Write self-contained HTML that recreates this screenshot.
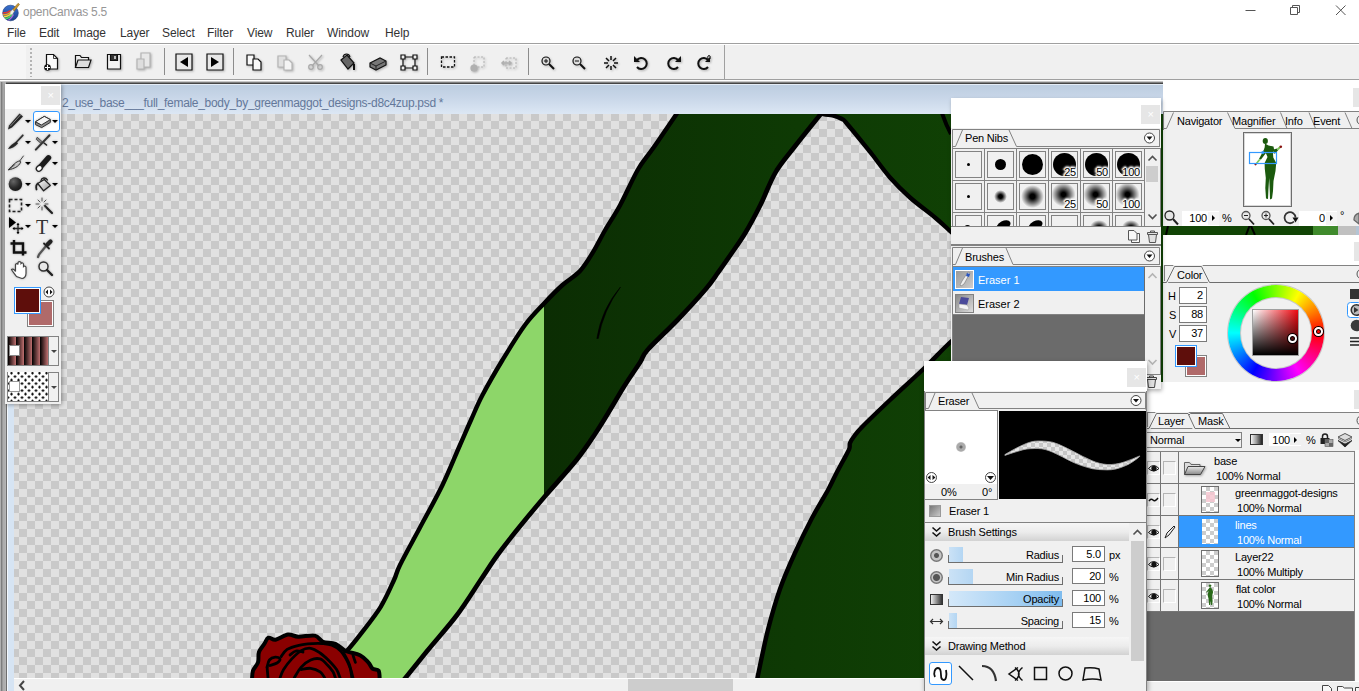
<!DOCTYPE html>
<html><head><meta charset="utf-8"><title>openCanvas 5.5</title>
<style>
html,body{margin:0;padding:0}
body{width:1359px;height:691px;overflow:hidden;position:relative;background:#fff;font-family:"Liberation Sans",sans-serif;font-size:11px;letter-spacing:-.2px;color:#000}
.a{position:absolute}
.t{position:absolute;white-space:nowrap;line-height:14px}
.menu .t{font-size:12px;color:#333;top:25px;line-height:16px;letter-spacing:-.1px}
.hdr{position:absolute;background:#fff}
.cls{position:absolute;width:19px;height:19px;background:#e6e6e6;color:#fff;font-size:11px;line-height:18px;text-align:center}
.tabbar{position:absolute;background:#f0f0f0;border:1px solid #828282;box-sizing:border-box}
.fld{position:absolute;background:#fff;border:1px solid #7a7a7a;box-sizing:border-box;text-align:right;line-height:13px;font-size:11px}
.pn{position:absolute;background:#f0f0f0}
.arr{position:absolute;width:0;height:0;border-left:3px solid transparent;border-right:3px solid transparent;border-top:3px solid #000}
.cell{position:absolute;width:31px;height:31px;border-right:1px solid #828282;border-bottom:1px solid #828282}
.cell i{font-style:normal;position:absolute;left:2px;top:2px;width:25px;height:25px;border:1px solid #828282;display:block}
.cell b{position:absolute;border-radius:50%;background:#000;display:block}
.cell s{position:absolute;right:1px;bottom:-1px;font-size:11px;line-height:11px;text-decoration:none;color:#000;text-shadow:0 0 2px #fff,0 0 2px #fff,0 0 3px #fff,0 0 3px #fff,1px 0 1px #fff,-1px 0 1px #fff,0 1px 1px #fff,0 -1px 1px #fff,-2px 0 2px #fff,0 -2px 2px #fff}
.lrow{position:absolute;left:0;width:207px;height:31px;border-bottom:1px solid #757575;background:#f0f0f0}
.lrow .e{position:absolute;left:0;top:0;width:13px;height:31px;border-right:1px solid #757575}.lrow .e:before{content:"";position:absolute;left:0;top:9px;width:11px;height:12px;border:1px solid #b4b4b4;border-right-color:#fff;border-bottom-color:#fff}
.lrow .k{position:absolute;left:14px;top:0;width:17px;height:31px;border-right:1px solid #757575}
.lrow .k i{position:absolute;left:2px;top:9px;width:11px;height:12px;border:1px solid #b4b4b4;border-right-color:#fff;border-bottom-color:#fff;display:block}
.lrow .th{position:absolute;top:2px;width:16px;height:25px;border:1px solid #707070;background:conic-gradient(#ccc 25%,#fff 0 50%,#ccc 0 75%,#fff 0) 0 0/8px 8px}

.chk{background:conic-gradient(#c9c9c9 25%,#e1e1e1 0 50%,#c9c9c9 0 75%,#e1e1e1 0) 5px 7px/16px 16px}
</style></head>
<body>
<!-- title bar -->
<div class="a" style="left:0;top:0;width:1359px;height:43px;background:#fff"></div>
<svg class="a" style="left:1px;top:2px" width="20" height="20" viewBox="0 0 20 20"><defs><clipPath id="icc"><circle cx="9.500" cy="11" r="7.800"/></clipPath><linearGradient id="icg" x1="0" y1="0" x2="0" y2="1"><stop offset="0" stop-color="#3a72cf"/><stop offset="1" stop-color="#1a3d8c"/></linearGradient></defs><circle cx="9.500" cy="11" r="7.800" fill="url(#icg)" stroke="#1b3a7a" stroke-width=".6"/><g clip-path="url(#icc)" fill="none" stroke-width="1.500"><path d="M9.500 8.500Q6 11.500 1 11" stroke="#e8382f"/><path d="M10.300 9.500Q7 13 1.500 13" stroke="#f5a623"/><path d="M11 10.500Q8 14.500 2.500 15" stroke="#f3e53a"/><path d="M11.700 11.500Q9 16 4 17" stroke="#4cd964"/><path d="M12.400 12.500Q10 17.500 6 19" stroke="#b06ad8"/></g><path d="M17.200 1.200l1.300 1.200-5.300 6.800-1.800-1.600z" fill="#c8952e" stroke="#7a5a1a" stroke-width=".5"/><path d="M11.400 7.600l1.800 1.600-1.600 3-2.600.6.400-2.800z" fill="#f4f0e4" stroke="#999" stroke-width=".4"/></svg>
<div class="t" style="left:23px;top:4px;font-size:12px;color:#979797;line-height:17px;letter-spacing:-.25px">openCanvas 5.5</div>
<svg class="a" style="left:1240px;top:0" width="119" height="22" viewBox="0 0 119 22" fill="none" stroke="#555" stroke-width="1"><path d="M5.5 10.5h10"/><path d="M50.5 7.5h7v7h-7zM52.500 7.500v-2h7v7h-2"/><path d="M96 5.500l9.500 9.500M105.500 5.500L96 15"/></svg>
<div class="menu">
<div class="t" style="left:7px">File</div><div class="t" style="left:39px">Edit</div><div class="t" style="left:73px">Image</div><div class="t" style="left:120px">Layer</div><div class="t" style="left:162px">Select</div><div class="t" style="left:207px">Filter</div><div class="t" style="left:247px">View</div><div class="t" style="left:286px">Ruler</div><div class="t" style="left:327px">Window</div><div class="t" style="left:385px">Help</div>
</div>
<!-- toolbar -->
<div class="a" style="left:0;top:43px;width:1359px;height:38px;background:#f0f0f0;border-top:1px solid #a0a0a0;box-sizing:border-box"></div>
<div class="a" style="left:0;top:44px;width:1359px;height:1px;background:#fff"></div>
<div class="a" style="left:0;top:45px;width:26px;height:34px;background:#f6f6f6"></div>
<div class="a" style="left:0;top:79px;width:1359px;height:1px;background:#a0a0a0"></div><div class="a" style="left:0;top:80px;width:1359px;height:1px;background:#fff"></div>
<div class="a" style="left:30px;top:48px;width:2px;height:29px;background:repeating-linear-gradient(#b4b4b4 0 2px,transparent 2px 4px)"></div>
<div class="a" style="left:164px;top:48px;width:1px;height:27px;background:#8c8c8c"></div>
<div class="a" style="left:233px;top:48px;width:1px;height:27px;background:#8c8c8c"></div>
<div class="a" style="left:427px;top:48px;width:1px;height:27px;background:#8c8c8c"></div>
<div class="a" style="left:528px;top:48px;width:1px;height:27px;background:#8c8c8c"></div>
<div class="a" style="left:724px;top:45px;width:1px;height:34px;background:#a0a0a0"></div>
<svg class="a" style="left:0;top:43px;filter:drop-shadow(1px 1px .8px rgba(0,0,0,.28))" width="730" height="38" viewBox="0 43 730 38">
<g fill="none" stroke="#111" stroke-width="1.2">
<!-- new -->
<path d="M46.500 54.500h7l4 4v10.500h-11z" fill="#fafafa"/><path d="M53.500 54.500v4h4" stroke-width=".8"/><circle cx="47.500" cy="67.500" r="3.300" fill="#111" stroke="none"/><path d="M45 67.500h5M47.500 65v5" stroke="#fff" stroke-width="1.100"/>
<!-- open -->
<path d="M75.500 67.500V55.500h4.500l1.500 2h7v2.500" fill="#eee"/><path d="M75.500 67.500l2.500-7.500h13l-2.500 7.500z" fill="#ddd"/>
<!-- save -->
<path d="M107.500 54.500h13v14.500h-13z" fill="#f4f4f4"/><path d="M110.500 54.500h7v6h-7z" fill="#333"/><path d="M115 56v3" stroke="#eee" stroke-width="1.500"/>
<!-- save all (disabled) -->
<g stroke="#b4b4b4"><path d="M141 53h9v14h-9z" fill="#e8e8e8"/><path d="M137 59h7v10h-7z" fill="#ddd"/></g>
<!-- prev / next -->
<path d="M176 54h16v16h-16z" fill="#e8e8e8"/><path d="M188 57v10l-8-5z" fill="#000" stroke="none"/>
<path d="M207 54h16v16h-16z" fill="#e8e8e8"/><path d="M211 57v10l8-5z" fill="#000" stroke="none"/>
<!-- copy -->
<path d="M247 55h7v10h-7z" fill="#fafafa"/><path d="M253 59h5l3 3v8h-8z" fill="#fafafa"/>
<!-- paste (disabled) -->
<g stroke="#b4b4b4"><path d="M278 56h8v11h-8z" fill="#e0e0e0"/><path d="M284 60h5l3 3v7h-8z" fill="#f4f4f4"/></g>
<!-- cut (disabled) -->
<g stroke="#a8a8a8"><path d="M309 55l10 11M322 55l-10 11"/><circle cx="311" cy="67" r="2.3"/><circle cx="320" cy="67" r="2.3"/></g>
<!-- bucket -->
<path d="M341 60l6-5 7 8-6 6z" fill="#666"/><path d="M343 57c1-4 6-4 7 0" /><path d="M354 64v6" stroke-width="2"/>
<!-- eraser -->
<path d="M370 63l10-5 6 3v4l-10 5-6-3z" fill="#777"/><path d="M370 63l6 3 10-5M376 66v4" stroke="#222" stroke-width="1"/>
<!-- transform -->
<path d="M403 57h12v11h-12z"/><path d="M401 55h4v4h-4zM413 55h4v4h-4zM401 66h4v4h-4zM413 66h4v4h-4z" fill="#f0f0f0" stroke-width="1.2"/>
<g transform="translate(0 1)"><!-- select rect -->
<path d="M441.500 56h13v10h-13z" stroke-dasharray="2.500 1.500" stroke-width="1.300"/>
<g stroke="#b0b0b0"><path d="M474 56h10v10h-10z" stroke-dasharray="2 1.500" stroke-width="1"/><circle cx="474" cy="67" r="3" fill="#b0b0b0"/>
<path d="M506 57h10v10h-10z" stroke-dasharray="2 1.500" stroke-width="1"/><path d="M502 62h9M504 60l-2 2 2 2M509 60l2 2-2 2" stroke-width="1.500"/></g>
<!-- zoom in/out -->
<circle cx="546" cy="60" r="4"/><path d="M549 63l5 5" stroke-width="2"/><path d="M544 60h4M546 58v4" stroke-width="1"/>
<circle cx="577" cy="60" r="4"/><path d="M580 63l5 5" stroke-width="2"/><path d="M575 60h4" stroke-width="1"/>
<!-- sparkle -->
<path d="M611 55v4M611 65v4M604 62h4M614 62h4M606 57l3 3M613 64l3 3M616 57l-3 3M609 64l-3 3" stroke-width="1.500"/>
<!-- undo redo reset -->
<path d="M637 59a5.500 5.500 0 1 1 0 7" stroke-width="2"/><path d="M634 55v6h6z" fill="#111" stroke="none"/>
<path d="M678 59a5.500 5.500 0 1 0 0 7" stroke-width="2"/><path d="M681 55v6h-6z" fill="#111" stroke="none"/>
<path d="M708 59a5.500 5.500 0 1 0 0 7" stroke-width="2"/><path d="M710 56v5h-5z" fill="#111" stroke="none"/><ellipse cx="709" cy="56.500" rx="1.300" ry="2" stroke-width="1"/>
</g></g></svg>
<!-- document window -->
<div class="a" style="left:0;top:81px;width:1359px;height:1px;background:#c8c8c8"></div>
<div class="a" style="left:0;top:82px;width:1359px;height:1px;background:#808080"></div><div class="a" style="left:0;top:83px;width:1359px;height:1px;background:#454545"></div>
<div class="a" style="left:0;top:82px;width:6px;height:609px;background:linear-gradient(90deg,#b0b0b0 0 1px,#7d7d7d 1px 2px,#9a9a9a 2px 3px,#adadad 3px 5px,#b4b4b4 5px)"></div>
<div class="a" style="left:6px;top:84px;width:1px;height:607px;background:#6e6e6e"></div>
<div class="a" style="left:7px;top:84px;width:1px;height:607px;background:#f4f8fc"></div>
<div class="a" style="left:8px;top:84px;width:6px;height:607px;background:#d6e4f3"></div>
<div class="a" style="left:8px;top:84px;width:1351px;height:30px;background:linear-gradient(#e4ecf6 0 1px,#bccde0 1px,#c8d6e8 45%,#dce7f4)"></div>
<div class="t" style="left:62px;top:95px;font-size:12px;color:#64789a;line-height:16px;letter-spacing:-.3px">2_use_base___full_female_body_by_greenmaggot_designs-d8c4zup.psd *</div>
<div class="a chk" style="left:14px;top:114px;width:1345px;height:564px"></div>
<svg id="art" width="1359" height="691" viewBox="0 0 1359 691" style="position:absolute;left:0;top:0">
<defs><linearGradient id="dg" gradientUnits="userSpaceOnUse" x1="544" y1="0" x2="1050" y2="0"><stop offset="0" stop-color="#0b2d03"/><stop offset=".5" stop-color="#0e3a04"/><stop offset="1" stop-color="#114405"/></linearGradient>
<clipPath id="cv"><rect x="14" y="114" width="1345" height="564"/></clipPath>
<clipPath id="armc"><path d="M686.0 100.0C684.4 102.3 682.0 105.9 676.5 114.0C671.0 122.1 659.2 139.5 652.7 148.8C646.2 158.1 643.1 160.6 637.7 170.0C632.3 179.4 625.6 195.0 620.2 205.0C614.8 215.0 609.8 222.1 605.2 230.0C600.6 237.9 596.9 245.9 592.7 252.7C588.5 259.5 585.0 265.6 580.0 271.0C575.0 276.4 568.3 279.8 562.5 285.0C556.7 290.2 551.2 295.8 545.0 302.5C538.8 309.2 532.1 315.4 525.0 325.0C517.9 334.6 509.6 348.3 502.5 360.0C495.4 371.7 487.8 385.0 482.5 395.0C477.2 405.0 474.8 411.7 471.0 420.0C467.2 428.3 464.8 434.2 460.0 445.0C455.2 455.8 449.2 471.2 442.5 485.0C435.8 498.8 427.1 514.2 420.0 527.5C412.9 540.8 404.3 556.2 400.0 565.0C395.7 573.8 397.2 573.0 394.0 580.0C390.8 587.0 386.2 597.9 380.7 606.8C375.2 615.7 366.7 626.2 361.0 633.6C355.3 641.0 351.8 645.5 346.6 651.2C341.4 656.9 332.8 665.2 330.0 668.0L395.0 691.0C396.7 688.8 399.9 684.7 405.4 677.9C410.9 671.1 419.4 660.5 428.0 650.0C436.6 639.5 448.2 626.7 457.0 615.0C465.8 603.3 473.9 590.0 480.6 580.0C487.4 570.0 490.8 564.2 497.5 555.0C504.2 545.8 513.0 534.8 521.0 525.0C529.0 515.2 536.0 506.8 545.2 496.0C554.5 485.2 568.0 470.6 576.5 460.0C585.0 449.4 590.4 440.8 596.0 432.5C601.6 424.2 605.2 417.9 610.0 410.0C614.8 402.1 620.0 392.9 625.0 385.0C630.0 377.1 636.2 368.3 640.0 362.5C643.8 356.7 641.2 357.1 647.5 350.0C653.8 342.9 667.9 330.0 677.5 320.0C687.1 310.0 698.2 297.9 705.0 290.0C711.8 282.1 713.8 278.5 718.0 272.7C722.2 266.9 725.8 261.7 730.4 255.0C735.0 248.3 740.4 241.0 745.4 232.7C750.4 224.4 755.4 215.0 760.4 205.0C765.4 195.0 769.7 182.3 775.4 172.6C781.1 162.9 787.0 156.6 794.6 146.8C802.2 137.0 816.2 119.7 821.0 113.8C825.8 107.9 821.5 113.8 823.5 111.5C825.5 109.2 831.4 101.9 833.0 100.0Z"/></clipPath>
</defs>
<g clip-path="url(#cv)">
<path d="M811.0 100.0C812.6 102.1 816.9 110.2 820.5 112.8C824.1 115.4 829.1 114.4 832.6 115.4C836.1 116.4 839.3 117.6 841.5 118.8C843.7 120.0 842.1 118.0 846.0 122.5C849.9 127.0 860.6 140.2 865.0 145.6C869.4 151.0 868.3 149.7 872.5 155.0C876.7 160.3 883.8 170.4 890.0 177.5C896.2 184.6 902.5 190.8 910.0 197.5C917.5 204.2 928.3 211.9 935.0 217.5C941.7 223.1 943.3 224.8 950.0 231.0C956.7 237.2 968.3 245.2 975.0 255.0C981.7 264.8 990.0 278.8 990.0 290.0C990.0 301.2 981.7 313.2 975.0 322.0C968.3 330.8 958.3 334.9 950.0 342.5C941.7 350.1 935.0 357.9 925.0 367.5C915.0 377.1 900.4 390.2 890.0 400.0C879.6 409.8 868.5 420.4 862.5 426.5C856.5 432.6 856.1 433.8 854.0 436.5C851.9 439.2 850.8 440.9 850.0 443.0C849.2 445.1 850.3 446.2 849.2 449.0C848.1 451.8 845.8 455.7 843.5 460.0C841.2 464.3 838.1 470.0 835.5 475.0C832.9 480.0 832.0 482.7 828.0 490.0C824.0 497.3 817.1 508.3 811.5 519.0C805.9 529.7 799.8 542.3 794.5 554.0C789.2 565.7 784.4 576.4 780.0 589.0C775.6 601.6 771.8 614.8 768.0 629.6C764.2 644.4 759.7 667.4 757.5 677.6C755.3 687.8 755.4 688.8 755.0 691.0L1359 691L1359 100Z" fill="url(#dg)" stroke="#000" stroke-width="4.4" stroke-linejoin="round"/>
<path d="M686.0 100.0C684.4 102.3 682.0 105.9 676.5 114.0C671.0 122.1 659.2 139.5 652.7 148.8C646.2 158.1 643.1 160.6 637.7 170.0C632.3 179.4 625.6 195.0 620.2 205.0C614.8 215.0 609.8 222.1 605.2 230.0C600.6 237.9 596.9 245.9 592.7 252.7C588.5 259.5 585.0 265.6 580.0 271.0C575.0 276.4 568.3 279.8 562.5 285.0C556.7 290.2 551.2 295.8 545.0 302.5C538.8 309.2 532.1 315.4 525.0 325.0C517.9 334.6 509.6 348.3 502.5 360.0C495.4 371.7 487.8 385.0 482.5 395.0C477.2 405.0 474.8 411.7 471.0 420.0C467.2 428.3 464.8 434.2 460.0 445.0C455.2 455.8 449.2 471.2 442.5 485.0C435.8 498.8 427.1 514.2 420.0 527.5C412.9 540.8 404.3 556.2 400.0 565.0C395.7 573.8 397.2 573.0 394.0 580.0C390.8 587.0 386.2 597.9 380.7 606.8C375.2 615.7 366.7 626.2 361.0 633.6C355.3 641.0 351.8 645.5 346.6 651.2C341.4 656.9 332.8 665.2 330.0 668.0L395.0 691.0C396.7 688.8 399.9 684.7 405.4 677.9C410.9 671.1 419.4 660.5 428.0 650.0C436.6 639.5 448.2 626.7 457.0 615.0C465.8 603.3 473.9 590.0 480.6 580.0C487.4 570.0 490.8 564.2 497.5 555.0C504.2 545.8 513.0 534.8 521.0 525.0C529.0 515.2 536.0 506.8 545.2 496.0C554.5 485.2 568.0 470.6 576.5 460.0C585.0 449.4 590.4 440.8 596.0 432.5C601.6 424.2 605.2 417.9 610.0 410.0C614.8 402.1 620.0 392.9 625.0 385.0C630.0 377.1 636.2 368.3 640.0 362.5C643.8 356.7 641.2 357.1 647.5 350.0C653.8 342.9 667.9 330.0 677.5 320.0C687.1 310.0 698.2 297.9 705.0 290.0C711.8 282.1 713.8 278.5 718.0 272.7C722.2 266.9 725.8 261.7 730.4 255.0C735.0 248.3 740.4 241.0 745.4 232.7C750.4 224.4 755.4 215.0 760.4 205.0C765.4 195.0 769.7 182.3 775.4 172.6C781.1 162.9 787.0 156.6 794.6 146.8C802.2 137.0 816.2 119.7 821.0 113.8C825.8 107.9 821.5 113.8 823.5 111.5C825.5 109.2 831.4 101.9 833.0 100.0Z" fill="url(#dg)"/>
<g clip-path="url(#armc)"><path d="M300 306H544V700H300Z" fill="#8dd669"/></g>
<path d="M686.0 100.0C684.4 102.3 682.0 105.9 676.5 114.0C671.0 122.1 659.2 139.5 652.7 148.8C646.2 158.1 643.1 160.6 637.7 170.0C632.3 179.4 625.6 195.0 620.2 205.0C614.8 215.0 609.8 222.1 605.2 230.0C600.6 237.9 596.9 245.9 592.7 252.7C588.5 259.5 585.0 265.6 580.0 271.0C575.0 276.4 568.3 279.8 562.5 285.0C556.7 290.2 551.2 295.8 545.0 302.5C538.8 309.2 532.1 315.4 525.0 325.0C517.9 334.6 509.6 348.3 502.5 360.0C495.4 371.7 487.8 385.0 482.5 395.0C477.2 405.0 474.8 411.7 471.0 420.0C467.2 428.3 464.8 434.2 460.0 445.0C455.2 455.8 449.2 471.2 442.5 485.0C435.8 498.8 427.1 514.2 420.0 527.5C412.9 540.8 404.3 556.2 400.0 565.0C395.7 573.8 397.2 573.0 394.0 580.0C390.8 587.0 386.2 597.9 380.7 606.8C375.2 615.7 366.7 626.2 361.0 633.6C355.3 641.0 351.8 645.5 346.6 651.2C341.4 656.9 332.8 665.2 330.0 668.0" fill="none" stroke="#000" stroke-width="4.4" stroke-linejoin="round"/>
<path d="M833.0 100.0C831.4 101.9 825.5 109.2 823.5 111.5C821.5 113.8 825.8 107.9 821.0 113.8C816.2 119.7 802.2 137.0 794.6 146.8C787.0 156.6 781.1 162.9 775.4 172.6C769.7 182.3 765.4 195.0 760.4 205.0C755.4 215.0 750.4 224.4 745.4 232.7C740.4 241.0 735.0 248.3 730.4 255.0C725.8 261.7 722.2 266.9 718.0 272.7C713.8 278.5 711.8 282.1 705.0 290.0C698.2 297.9 687.1 310.0 677.5 320.0C667.9 330.0 653.8 342.9 647.5 350.0C641.2 357.1 643.8 356.7 640.0 362.5C636.2 368.3 630.0 377.1 625.0 385.0C620.0 392.9 614.8 402.1 610.0 410.0C605.2 417.9 601.6 424.2 596.0 432.5C590.4 440.8 585.0 449.4 576.5 460.0C568.0 470.6 554.5 485.2 545.2 496.0C536.0 506.8 529.0 515.2 521.0 525.0C513.0 534.8 504.2 545.8 497.5 555.0C490.8 564.2 487.4 570.0 480.6 580.0C473.9 590.0 465.8 603.3 457.0 615.0C448.2 626.7 436.6 639.5 428.0 650.0C419.4 660.5 410.9 671.1 405.4 677.9C399.9 684.7 396.7 688.8 395.0 691.0" fill="none" stroke="#000" stroke-width="4.700" stroke-linejoin="round"/>
<path d="M620.500 287Q603.500 310 598.300 338.500L596.800 338.500Q601.500 309 620.500 287Z" fill="#000" stroke="#000" stroke-width=".5"/>
<path d="M938 100L942.5 114.5Q946 125 951 134" fill="none" stroke="#000" stroke-width="4"/>
<path d="M252.0 680.0C252.2 678.4 252.0 673.5 253.0 670.6C254.0 667.7 257.0 665.5 258.0 662.4C259.0 659.3 257.9 655.1 259.0 652.0C260.1 648.9 262.7 646.3 264.3 643.9C265.9 641.5 266.5 638.4 268.4 637.7C270.3 637.0 272.3 640.2 275.6 639.7C278.9 639.2 284.2 635.1 288.0 634.6C291.8 634.1 293.8 636.5 298.3 636.7C302.8 636.9 310.7 634.8 314.8 635.6C318.9 636.5 319.6 640.4 323.0 641.8C326.4 643.2 331.6 642.4 335.4 643.9C339.2 645.4 341.6 649.1 345.7 651.0C349.8 652.9 356.2 653.3 360.0 655.2C363.8 657.1 366.2 660.2 368.3 662.4C370.4 664.6 370.8 667.2 372.5 668.6C374.2 670.0 377.4 668.7 378.6 670.6C379.8 672.5 379.5 678.4 379.7 680.0Z" fill="#8a0000" stroke="#000" stroke-width="4" stroke-linejoin="round"/>
<g fill="none" stroke="#000" stroke-width="2.800" stroke-linecap="round"><path d="M267.1 667.1C267.5 665.9 268.0 661.7 269.4 660.0C270.8 658.3 273.5 657.3 275.3 657.1C277.1 656.9 279.7 657.9 280.0 658.9C280.3 659.9 278.7 661.9 277.0 663.0C275.3 664.1 271.2 665.1 270.0 665.5"/><path d="M268.0 678.0C267.9 676.2 267.2 668.9 267.1 667.1"/><path d="M281.2 656.5C282.2 655.3 284.2 651.3 287.1 649.4C290.1 647.5 294.6 646.3 298.9 645.3C303.2 644.3 309.1 643.9 313.0 643.6C316.9 643.3 319.2 643.3 322.4 643.6C325.5 643.9 328.9 644.1 331.9 645.3C334.8 646.5 337.8 648.3 340.1 650.6C342.5 652.9 344.2 655.8 346.0 658.9C347.8 662.0 349.5 666.3 350.7 669.5C351.9 672.7 352.6 676.6 353.0 678.0"/><path d="M280.0 678.0C280.6 676.6 281.6 672.7 283.6 669.5C285.6 666.3 288.9 662.0 291.8 658.9C294.7 655.8 298.1 652.4 301.2 650.6C304.3 648.8 307.5 647.9 310.7 648.3C313.9 648.7 317.0 650.9 320.1 653.0C323.2 655.1 326.8 658.5 329.5 661.2C332.2 664.0 334.8 666.7 336.6 669.5C338.4 672.3 339.5 676.6 340.1 678.0"/><path d="M294.2 678.0C295.4 676.2 298.4 670.1 301.2 667.1C303.9 664.1 307.5 661.4 310.7 660.0C313.9 658.6 317.4 658.1 320.1 658.9C322.9 659.7 325.1 662.6 327.2 664.8C329.3 666.9 331.6 669.6 333.0 671.8C334.4 674.0 335.0 677.0 335.4 678.0"/><path d="M301.2 669.5C302.8 669.3 307.5 667.9 310.7 668.3C313.9 668.7 317.8 670.2 320.1 671.8C322.5 673.4 324.0 677.0 324.8 678.0"/><path d="M343.6 653.0C344.6 655.0 348.1 660.6 349.5 664.8C350.9 669.0 351.5 675.8 351.9 678.0"/><path d="M353.0 655.3C353.4 656.5 355.0 661.2 355.4 662.4"/><path d="M290.0 655.0C291.0 654.3 293.8 651.5 296.0 651.0C298.2 650.5 301.8 651.8 303.0 652.0"/></g>
</g></svg>
<!-- h scrollbar -->
<div class="a" style="left:14px;top:678px;width:1345px;height:13px;background:#f0f0f0;border-top:1px solid #fff;box-sizing:border-box"></div>
<div class="a" style="left:628px;top:679px;width:105px;height:12px;background:#cdcdcd"></div>
<svg class="a" style="left:17px;top:680px" width="10" height="11" viewBox="0 0 10 11"><path d="M7 1L3 5.500 7 10" fill="none" stroke="#444" stroke-width="2"/></svg>
<!-- strip between navigator and colour -->
<div class="a" style="left:1313px;top:226px;width:25px;height:9px;background:#3f8a2c"></div>
<div class="a" style="left:1338px;top:226px;width:18px;height:9px;background:#c0c0c0"></div>
<div class="a" style="left:1356px;top:226px;width:3px;height:9px;background:#b4c4d4"></div>
<svg class="a" style="left:1163px;top:226px" width="150" height="9" viewBox="0 0 150 9" fill="none" stroke="#000" stroke-width="2"><path d="M5 0L3 9M86.500 0L83 9M88 0l4 9"/></svg>
<!-- NAVIGATOR -->
<div class="hdr" style="left:1163px;top:81px;width:196px;height:30px"></div>
<div class="cls" style="left:1353px;top:88px">×</div>
<div class="pn" style="left:1163px;top:111px;width:196px;height:115px"></div>
<svg class="a" style="left:1163px;top:111px" width="196" height="19" viewBox="0 0 196 19" fill="none" stroke="#828282" stroke-width="1">
<path d="M0.500 19V0.500H196"/><path d="M0 17.500h3.500L10.500 1.500M64.500 1.500L72 17.500H196"/><path d="M117.500 1.500l6.500 16M146 1.500l6.500 16M182 1.500l7 16"/><circle cx="199" cy="9" r="5" stroke="#555"/>
</svg>
<div class="t" style="left:1177px;top:114px">Navigator</div><div class="t" style="left:1232px;top:114px">Magnifier</div><div class="t" style="left:1285px;top:114px">Info</div><div class="t" style="left:1313px;top:114px">Event</div>
<div class="a" style="left:1243px;top:132px;width:49px;height:75px;background:#fff;border:1px solid #6e6e6e;box-sizing:border-box;box-shadow:inset 0 0 0 1px #d8d8d8"></div>
<svg class="a" style="left:1243px;top:132px" width="49" height="75" viewBox="0 0 49 75"><g fill="#1b5a0e"><ellipse cx="22.300" cy="9" rx="2.600" ry="3"/><path d="M22 11.500L25.500 13.500 30.500 14.500 31.200 18 30 22 30.300 25.500 33.200 31 32.500 39 30.500 49 30 59 29 66.500 27 67.500 26.800 60 26.200 46 25.400 58 25 67 23 66.500 22.300 56 22.800 46 21.800 37 21.600 31 24.500 25 22.800 21 21.500 17Z"/><path d="M22 15.500L24.500 19 18 27.500 16 27Z"/><path d="M30.500 17.500L34 16.500 35 18.500 31.500 22Z"/></g><g fill="#7cc95a"><path d="M18 27.500L13.500 32.500 12 32 16 27Z"/><path d="M34 16.500L37 14 38.200 15.500 35 18.500Z"/></g><circle cx="37.800" cy="14.800" r="1.300" fill="#8a1010"/><circle cx="12.500" cy="32.300" r="1.100" fill="#8a1010"/><rect x="6.500" y="20.500" width="27" height="11" fill="none" stroke="#3399ff" stroke-width="1.200"/><circle cx="19.800" cy="20.500" r="1.600" fill="#3399ff"/></svg>
<!-- nav controls -->
<div class="a" style="left:1182px;top:211px;width:37px;height:15px;background:#fff"></div>
<div class="t" style="left:1182px;top:211px;width:25px;text-align:right">100</div>
<div class="a" style="left:1208px;top:212px;width:11px;height:13px;background:#f4f4f4"></div>
<div class="a" style="left:1212px;top:215px;border-left:3px solid #000;border-top:3px solid transparent;border-bottom:3px solid transparent"></div>
<div class="t" style="left:1222px;top:211px">%</div>
<div class="a" style="left:1299px;top:211px;width:38px;height:15px;background:#fff"></div>
<div class="t" style="left:1299px;top:211px;width:26px;text-align:right">0</div>
<div class="a" style="left:1326px;top:212px;width:11px;height:13px;background:#f4f4f4"></div>
<div class="a" style="left:1330px;top:215px;border-left:3px solid #000;border-top:3px solid transparent;border-bottom:3px solid transparent"></div>
<div class="t" style="left:1340px;top:208px">°</div>
<svg class="a" style="left:1163px;top:209px" width="196" height="18" viewBox="0 0 196 18" fill="none" stroke="#222" stroke-width="1.300">
<circle cx="6.500" cy="6.500" r="4.500" fill="#e4e4e4"/><path d="M10 10l5 5.500" stroke-width="2"/>
<circle cx="83" cy="6.500" r="4" fill="#e8e8e8" stroke="#555"/><path d="M86 10l5 5.500" stroke-width="1.800"/><path d="M81 6.500h4" stroke-width="1"/>
<circle cx="103" cy="6.500" r="4" fill="#e8e8e8" stroke="#555"/><path d="M106 10l5 5.500" stroke-width="1.800"/><path d="M101 6.500h4M103 4.500v4" stroke-width="1"/>
<path d="M131 12.500a5.500 5.500 0 1 1 1.500 -4" stroke="#333" stroke-width="1.800"/><path d="M129.500 8.500h6l-3 5z" fill="#111" stroke="none"/>
<path d="M196 4a7 7 0 0 0-5 7l5 4z" fill="#aaa" stroke="#666"/>
</svg>
<!-- COLOR -->
<div class="hdr" style="left:1163px;top:235px;width:196px;height:30px"></div>
<div class="cls" style="left:1354px;top:242px">×</div>
<div class="pn" style="left:1163px;top:265px;width:196px;height:117px"></div>
<div class="tabbar" style="left:1164px;top:265px;width:200px;height:18px"></div>
<svg class="a" style="left:1163px;top:265px" width="196" height="19" viewBox="0 0 196 19" fill="none" stroke="#6e6e6e" stroke-width="1">
<path d="M0 17.500h3.500L11.500 1.500h27L46.500 17.500H196" stroke="#f0f0f0" stroke-width="3"/>
<path d="M0 17.500h3.500L11.500 1.500h27L46.500 17.500H196"/><circle cx="199" cy="9" r="5" stroke="#555"/></svg>
<div class="t" style="left:1177px;top:268px">Color</div>
<div class="t" style="left:1168px;top:289px">H</div><div class="t" style="left:1169px;top:308px">S</div><div class="t" style="left:1169px;top:327px">V</div>
<div class="fld" style="left:1179px;top:287px;width:28px;height:17px;padding:1px 3px 0 0">2</div>
<div class="fld" style="left:1179px;top:306px;width:28px;height:17px;padding:1px 3px 0 0">88</div>
<div class="fld" style="left:1179px;top:325px;width:28px;height:17px;padding:1px 3px 0 0">37</div>
<div class="a" style="left:1185px;top:355px;width:22px;height:22px;box-sizing:border-box;border:1px solid #828282;background:#b06a6a;box-shadow:inset 0 0 0 1px #fff"></div>
<div class="a" style="left:1175px;top:345px;width:22px;height:22px;box-sizing:border-box;border:1px solid #3399ff;background:#5e0e0b;box-shadow:inset 0 0 0 1px #fff"></div>
<div class="a" style="left:1228px;top:285px;width:96px;height:96px;border-radius:50%;background:conic-gradient(from 90deg,#f00,#f0f,#00f,#0ff,#0f0,#ff0,#f00);box-shadow:0 0 0 1px #c8c8c8"></div>
<div class="a" style="left:1241px;top:298px;width:70px;height:70px;border-radius:50%;background:#f0f0f0;box-shadow:0 0 0 1px #c8c8c8"></div>
<div class="a" style="left:1253px;top:310px;width:45px;height:45px;background:linear-gradient(#0000,#000),linear-gradient(90deg,#fff,#f00810);box-shadow:0 0 0 1px #a0a0a0"></div>
<div class="a" style="left:1288px;top:334px;width:5px;height:5px;border-radius:50%;border:2px solid #fff;box-shadow:0 0 0 1px #000,inset 0 0 0 1px #000"></div>
<div class="a" style="left:1314px;top:327px;width:5px;height:5px;border-radius:50%;border:2px solid #fff;box-shadow:0 0 0 1px #000,inset 0 0 0 1px #000"></div>
<svg class="a" style="left:1346px;top:286px" width="13" height="66" viewBox="0 0 13 66"><rect x="4" y="3" width="9" height="10" fill="#333"/><rect x="1.500" y="16.500" width="14" height="15" rx="3" fill="#fff" stroke="#3399ff"/><circle cx="10.500" cy="24" r="5.300" fill="#bbb" stroke="#333" stroke-width="1.500"/><path d="M8 21v6l4.500-3z" fill="#333"/><circle cx="10.500" cy="39.500" r="5.800" fill="#3a3a3a"/><path d="M4 52h9M4 55.500h9M4 59h9" stroke="#222" stroke-width="1.500"/></svg>
<!-- LAYER -->
<div class="hdr" style="left:1147px;top:382px;width:212px;height:30px"></div>
<div class="cls" style="left:1354px;top:390px">×</div>
<div class="pn" style="left:1147px;top:412px;width:212px;height:279px"></div>
<div class="tabbar" style="left:1147px;top:412px;width:220px;height:17px"></div>
<svg class="a" style="left:1147px;top:412px" width="212" height="18" viewBox="0 0 212 18" fill="none" stroke="#6e6e6e" stroke-width="1">
<path d="M0 16.500h2L9.500 1.500h31L47 16.500H212" stroke="#f0f0f0" stroke-width="3"/>
<path d="M0 16.500h2L9.500 1.500h31.500L48 16.500H212"/><path d="M42 3l1.500-1.500h32L83 16.500"/><circle cx="215" cy="8.500" r="5" stroke="#555"/></svg>
<div class="t" style="left:1158px;top:414px">Layer</div><div class="t" style="left:1198px;top:414px">Mask</div>
<!-- blend row -->
<div class="a" style="left:1147px;top:432px;width:95px;height:16px;box-sizing:border-box;border:1px solid #828282;border-left:0;background:#f0f0f0"></div>
<div class="t" style="left:1150px;top:433px">Normal</div>
<div class="arr" style="left:1235px;top:439px"></div>
<div class="a" style="left:1250px;top:434px;width:13px;height:11px;box-sizing:border-box;border:1px solid #333;background:linear-gradient(90deg,#f4f4f4,#999 50%,#222)"></div>
<div class="a" style="left:1269px;top:433px;width:32px;height:13px;background:#fff"></div><div class="a" style="left:1290px;top:434px;width:11px;height:11px;background:#f0f0f0"></div>
<div class="t" style="left:1269px;top:433px;width:21px;text-align:right">100</div>
<div class="a" style="left:1294px;top:437px;border-left:3px solid #000;border-top:3px solid transparent;border-bottom:3px solid transparent"></div>
<div class="t" style="left:1306px;top:433px">%</div>
<svg class="a" style="left:1319px;top:431px" width="36" height="18" viewBox="0 0 36 18"><path d="M3.500 7.500V5.500a2.500 2.500 0 0 1 5 0v2" fill="none" stroke="#222" stroke-width="1.500"/><rect x="1.500" y="7" width="9" height="6" fill="#222"/><rect x="6" y="8.500" width="8" height="7" fill="#aaa" stroke="#555" stroke-width=".6"/><path d="M6 8.500h4v3.500H6zM10 12h4v3.500h-4z" fill="#666"/><path d="M26 2.500l7 3.500-7 3.500-7-3.500z" fill="#ddd" stroke="#555"/><path d="M19 9.500l7 3.500 7-3.500-7 6.500z" fill="#222" stroke="#222" stroke-width=".8" stroke-linejoin="round"/><path d="M19 7.500l7 3.500 7-3.500" fill="none" stroke="#777" stroke-width="1"/></svg>
<!-- layer list -->
<div class="a" style="left:1147px;top:451px;width:208px;height:1px;background:#828282"></div>
<div class="a" style="left:1147px;top:452px;width:207px;height:229px;background:#6b6b6b;border-right:1px solid #828282"></div>
<div class="a" style="left:1147px;top:452px;width:207px;height:160px">
 <div class="lrow" style="top:0"><div class="e"></div><div class="k"><i></i></div><div class="t" style="left:67px;top:2px">base</div><div class="t" style="left:69px;top:17px">100% Normal</div>
 <svg class="a" style="left:36px;top:8px;filter:drop-shadow(1px 1px 1px rgba(0,0,0,.3))" width="24" height="18" viewBox="0 0 24 18"><defs><linearGradient id="fg" x1="0" y1="0" x2="0" y2="1"><stop offset="0" stop-color="#e8e8e8"/><stop offset="1" stop-color="#8a8a8a"/></linearGradient></defs><path d="M1.500 14.500V2.500h5l1.500 2h9v3" fill="#dcdcdc" stroke="#666"/><path d="M1.500 14.500l3.500-8h17l-4.500 8z" fill="url(#fg)" stroke="#444"/></svg></div>
 <div class="lrow" style="top:32px"><div class="e"></div><div class="k"><i></i></div><div class="th" style="left:54px"></div><div class="a" style="left:59px;top:8px;width:9px;height:10px;background:#f6c6d0;opacity:.85"></div><div class="t" style="left:88px;top:2px">greenmaggot-designs</div><div class="t" style="left:90px;top:17px">100% Normal</div></div>
 <div class="lrow" style="top:64px"><div class="e"></div><div class="k"></div><div class="a" style="left:32px;top:0;width:175px;height:31px;background:#3399ff"></div><div class="th" style="left:54px;border-color:#3399ff"></div><div class="t" style="left:88px;top:2px;color:#fff">lines</div><div class="t" style="left:90px;top:17px;color:#fff">100% Normal</div>
 <svg class="a" style="left:17px;top:9px" width="12" height="14" viewBox="0 0 12 14"><path d="M1 13l2-5 7-7 1 1-6 8z" fill="#eee" stroke="#222" stroke-width="1"/></svg></div>
 <div class="lrow" style="top:96px"><div class="e"></div><div class="k"><i></i></div><div class="th" style="left:54px"></div><div class="t" style="left:88px;top:2px">Layer22</div><div class="t" style="left:90px;top:17px">100% Multiply</div></div>
 <div class="lrow" style="top:128px"><div class="e"></div><div class="k"><i></i></div><div class="th" style="left:54px"></div><div class="t" style="left:89px;top:2px">flat color</div><div class="t" style="left:90px;top:17px">100% Normal</div>
 <svg class="a" style="left:55px;top:4px" width="17" height="24" viewBox="0 0 17 24"><path d="M8 3a1.300 1.300 0 1 1 .1 0l2 2 1 3-1 4 .5 5-.5 4h-1l-.5-4-.5 4h-1l-.5-6-1-4 1-4-3 2 2.500-3.500z" fill="#2a6a1a"/></svg></div>
</div>
<svg class="a" style="left:1147px;top:452px" width="14" height="160" viewBox="0 0 14 160"><g fill="#111"><g id="eye"><path d="M1.500 16.500q5-6 10.500 0q-5.500 5-10.500 0z" fill="#fff" stroke="#111" stroke-width="1"/><circle cx="7" cy="16.500" r="2.700"/></g><use href="#eye" y="64"/><use href="#eye" y="96"/><use href="#eye" y="128"/></g><path d="M2 49q2-3 4-1t5-2" fill="none" stroke="#111" stroke-width="1.500"/></svg>
<div class="a" style="left:1355px;top:450px;width:4px;height:231px;background:#fafafa"></div>
<div class="a" style="left:1147px;top:681px;width:212px;height:10px;background:#f0f0f0;border-top:1px solid #fff;box-sizing:border-box"></div>
<svg class="a" style="left:1320px;top:684px" width="39" height="8" viewBox="0 0 39 8" fill="#f8f8f8" stroke="#444"><path d="M2.500 8V1.500h6l3 3V8"/><path d="M17.500 8V2.500h5l2 1.500h8V8"/><path d="M35.500 8V3.500H39"/></svg>
<!-- PEN NIBS / BRUSHES floating -->
<div class="a" style="left:951px;top:98px;width:210px;height:291px;background:#f0f0f0;box-shadow:1px 2px 4px rgba(0,0,0,.3)"></div>
<div class="hdr" style="left:951px;top:98px;width:210px;height:30px"></div>
<div class="cls" style="left:1141px;top:105px">×</div>
<svg class="a" style="left:951px;top:128px" width="210" height="20" viewBox="0 0 210 20" fill="none" stroke="#828282"><path d="M1.500 20V1.500H208.500V18.500"/><path d="M1 18.500h3.500L11.500 2M58 2L65.500 18.500H209"/><circle cx="198.500" cy="10" r="5" fill="#fff" stroke="#444"/><path d="M195.500 8.500h6l-3 3.500z" fill="#111" stroke="none"/></svg>
<div class="t" style="left:965px;top:131px">Pen Nibs</div>
<div class="a" style="left:952px;top:148px;width:193px;height:78px;overflow:hidden;border-left:1px solid #828282;border-top:1px solid #828282;box-sizing:border-box;background:#f0f0f0">
<div class="cell" style="left:0px;top:0px"><i style="overflow:hidden"><b style="left:11px;top:11px;width:3px;height:3px"></b></i></div>
<div class="cell" style="left:32px;top:0px"><i style="overflow:hidden"><b style="left:7px;top:7px;width:11px;height:11px"></b></i></div>
<div class="cell" style="left:64px;top:0px"><i style="overflow:hidden"><b style="left:2px;top:2px;width:21px;height:21px"></b></i></div>
<div class="cell" style="left:96px;top:0px"><i style="overflow:hidden"><b style="left:1px;top:1px;width:23px;height:23px"></b><s>25</s></i></div>
<div class="cell" style="left:128px;top:0px"><i style="overflow:hidden"><b style="left:1px;top:1px;width:23px;height:23px"></b><s>50</s></i></div>
<div class="cell" style="left:160px;top:0px"><i style="overflow:hidden"><b style="left:1px;top:1px;width:23px;height:23px"></b><s>100</s></i></div>
<div class="cell" style="left:0px;top:32px"><i style="overflow:hidden"><b style="left:11px;top:11px;width:3px;height:3px"></b></i></div>
<div class="cell" style="left:32px;top:32px"><i style="overflow:hidden"><b style="left:6px;top:6px;width:13px;height:13px;background:radial-gradient(#000 20%,#0000 70%)"></b></i></div>
<div class="cell" style="left:64px;top:32px"><i style="overflow:hidden"><b style="left:1px;top:1px;width:23px;height:23px;background:radial-gradient(#000 15%,#0000 70%)"></b></i></div>
<div class="cell" style="left:96px;top:32px"><i style="overflow:hidden"><b style="left:-1px;top:-2px;width:25px;height:25px;background:radial-gradient(#000 12%,#0000 68%)"></b><s>25</s></i></div>
<div class="cell" style="left:128px;top:32px"><i style="overflow:hidden"><b style="left:-1px;top:-2px;width:25px;height:25px;background:radial-gradient(#000 12%,#0000 68%)"></b><s>50</s></i></div>
<div class="cell" style="left:160px;top:32px"><i style="overflow:hidden"><b style="left:-1px;top:-2px;width:25px;height:25px;background:radial-gradient(#000 12%,#0000 68%)"></b><s>100</s></i></div>
<div class="cell" style="left:0px;top:64px"><i style="overflow:hidden"><b style="left:9px;top:9px;width:5px;height:3px"></b></i></div>
<div class="cell" style="left:32px;top:64px"><i style="overflow:hidden"><b style="left:8px;top:5px;width:15px;height:9px;border-radius:50%;transform:rotate(-28deg)"></b></i></div>
<div class="cell" style="left:64px;top:64px"><i style="overflow:hidden"><b style="left:8px;top:5px;width:15px;height:9px;border-radius:50%;transform:rotate(-28deg)"></b></i></div>
<div class="cell" style="left:96px;top:64px"><i style="overflow:hidden"><b style="left:11px;top:10px;width:3px;height:3px;background:#999"></b></i></div>
<div class="cell" style="left:128px;top:64px"><i style="overflow:hidden"><b style="left:6px;top:4px;width:18px;height:14px;background:radial-gradient(#000 10%,#0000 70%)"></b></i></div>
<div class="cell" style="left:160px;top:64px"><i style="overflow:hidden"><b style="left:6px;top:4px;width:18px;height:14px;background:radial-gradient(#000 10%,#0000 70%)"></b></i></div>
</div>
<div class="a" style="left:1145px;top:148px;width:15px;height:78px;background:#f0f0f0;border-right:1px solid #828282;border-top:1px solid #828282;box-sizing:content-box"></div>
<div class="a" style="left:1146px;top:166px;width:12px;height:16px;background:#cdcdcd"></div>
<svg class="a" style="left:1145px;top:149px" width="15" height="77" viewBox="0 0 15 77" fill="none" stroke="#505050" stroke-width="1.600"><path d="M3.500 11.500L7.500 7.500l4 4M3.500 65.500l4 4 4-4"/></svg>
<div class="a" style="left:951px;top:226px;width:210px;height:1px;background:#828282"></div>
<svg class="a" style="left:1126px;top:228px" width="34" height="16" viewBox="0 0 34 16" fill="#f8f8f8" stroke="#555"><path d="M5.500 5.500v9h8v-9z"/><path d="M2.500 2.500h5.500l3 3v6.500h-8.500z"/><path d="M21.500 4.500h10v2h-10zM22.500 6.500l1 8h6l1-8M24.500 4.500v-1.500h4v1.500" fill="#e0e0e0"/></svg>
<div class="a" style="left:951px;top:244px;width:210px;height:2px;background:#828282"></div>
<svg class="a" style="left:951px;top:246px" width="210" height="20" viewBox="0 0 210 20" fill="none" stroke="#828282"><path d="M1.500 20V1.500H208.500V18.500"/><path d="M1 18.500h3.500L11.500 2M55 2L62 18.500H209"/><circle cx="198.500" cy="10" r="5" fill="#fff" stroke="#444"/><path d="M195.500 8.500h6l-3 3.500z" fill="#111" stroke="none"/></svg>
<div class="t" style="left:965px;top:250px">Brushes</div>
<div class="a" style="left:952px;top:266px;width:192px;height:110px;background:#6b6b6b;border:1px solid #828282;border-bottom:0"></div>
<div class="a" style="left:953px;top:267px;width:191px;height:24px;background:#3399ff"></div>
<div class="a" style="left:953px;top:291px;width:191px;height:23px;background:#f0f0f0;border-bottom:1px solid #828282"></div>
<div class="a" style="left:955px;top:270px;width:17px;height:17px;border:1px solid #fff;background:linear-gradient(135deg,#999,#ccc)"></div>
<div class="a" style="left:955px;top:294px;width:17px;height:17px;border:1px solid #828282;background:linear-gradient(135deg,#888,#ddd)"></div>
<svg class="a" style="left:956px;top:271px" width="17" height="17" viewBox="0 0 17 17"><path d="M12 1l2 1-6 11-3 2-1-1 2-4z" fill="#eee" stroke="#666" stroke-width=".5"/><path d="M11 2l3 1-1 3-3-1z" fill="#2a55c0"/></svg>
<svg class="a" style="left:956px;top:295px" width="17" height="17" viewBox="0 0 17 17"><path d="M5 2l8 1-2 7-8-1z" fill="#4a4a9a"/><path d="M3 9l8 1 2 3-1 2-9-2z" fill="#f4f4f4" stroke="#999" stroke-width=".5"/></svg>
<div class="t" style="left:978px;top:273px;color:#fff;letter-spacing:0">Eraser 1</div>
<div class="t" style="left:978px;top:297px;letter-spacing:0">Eraser 2</div>
<div class="a" style="left:1145px;top:266px;width:15px;height:108px;background:#f0f0f0;border-top:1px solid #828282;border-right:1px solid #828282"></div>
<svg class="a" style="left:1145px;top:267px" width="15" height="107" viewBox="0 0 15 107" fill="none" stroke="#b4b4b4" stroke-width="1.600"><path d="M3.500 11L7.500 7l4 4M3.500 93l4 4 4-4"/></svg>
<div class="a" style="left:951px;top:374px;width:210px;height:1px;background:#828282"></div>
<svg class="a" style="left:1143px;top:373px" width="17" height="16" viewBox="0 0 17 16" fill="#e0e0e0" stroke="#444"><path d="M3.500 4.500h10v2h-10zM4.500 6.500l1 8h6l1-8M6.500 4.500v-1.500h4v1.500"/></svg>
<!-- ERASER floating -->
<div class="a" style="left:924px;top:361px;width:223px;height:330px;background:#f0f0f0;box-shadow:1px 2px 5px rgba(0,0,0,.35)"></div>
<div class="hdr" style="left:924px;top:361px;width:223px;height:30px"></div>
<div class="cls" style="left:1127px;top:368px">×</div>
<svg class="a" style="left:924px;top:391px" width="223" height="20" viewBox="0 0 223 20" fill="none" stroke="#828282"><path d="M1.500 20V1.500H221.500V18.500"/><path d="M1 17.500h3.500L11 2M48 2L55 17.500H222"/><circle cx="212" cy="9.500" r="5" fill="#fff" stroke="#444"/><path d="M209 8h6l-3 3.500z" fill="#111" stroke="none"/></svg>
<div class="t" style="left:938px;top:394px">Eraser</div>
<div class="a" style="left:924px;top:391px;width:1px;height:300px;background:#828282"></div>
<!-- nib preview -->
<div class="a" style="left:925px;top:410px;width:73px;height:90px;background:#fff;border:1px solid #828282;border-left:0;box-sizing:border-box"></div>
<div class="a" style="left:925px;top:484px;width:72px;height:15px;background:#f0f0f0"></div>
<div class="a" style="left:956px;top:442px;width:10px;height:10px;border-radius:50%;background:radial-gradient(#666 0 1px,#aaa 2px 4px,#ccc 5px)"></div>
<svg class="a" style="left:925px;top:471px" width="73" height="13" viewBox="0 0 73 13" fill="#fff" stroke="#444"><circle cx="6.500" cy="6.500" r="5"/><path d="M5.500 4l-3 2.500 3 2.500zM7.500 4l3 2.500-3 2.500z" fill="#111" stroke="none"/><circle cx="65.500" cy="6.500" r="5"/><path d="M62 5h7l-3.500 4z" fill="#111" stroke="none"/></svg>
<div class="t" style="left:941px;top:485px">0%</div><div class="t" style="left:982px;top:485px">0°</div>
<!-- stroke preview -->
<div class="a" style="left:999px;top:411px;width:147px;height:88px;background:#000"></div>
<svg class="a" style="left:999px;top:411px" width="147" height="88" viewBox="0 0 147 88"><defs><pattern id="ck" width="8" height="8" patternUnits="userSpaceOnUse"><rect width="8" height="8" fill="#e6e6e6"/><rect width="4" height="4" fill="#c6c6c6"/><rect x="4" y="4" width="4" height="4" fill="#c6c6c6"/></pattern></defs><path d="M5.900 43.600C12 40 18 36.500 24.300 33.800C29 31.500 34 30 39 30C44 30 49 30.200 53.800 31.300C61 33.500 67 36.800 73.500 40C80 43.500 86.500 47 93.200 49.800C98 51.800 103 53.200 108 53.500C114 53.800 120 52.800 125.200 51C130.500 49.200 136 47 140.700 44.900L140.700 45.400C136 49.500 131 53 125.200 55.200C120 57.500 114 59 108 58.900C103 58.900 98 58.500 93.200 57.700C86.500 56 80 54 73.500 51C67 48 60.500 44 53.800 41.200C49 39.200 44 37.500 39 37.500C34 37.500 29 37.500 24.300 38.700C18 40.200 12 42.500 5.900 44.400Z" fill="url(#ck)" stroke="#a8a8a8" stroke-width=".8"/></svg>
<!-- eraser 1 row -->
<div class="a" style="left:929px;top:505px;width:12px;height:12px;background:linear-gradient(135deg,#777,#c8c8c8);border:1px solid #999;box-sizing:border-box"></div>
<div class="t" style="left:949px;top:504px">Eraser 1</div>
<div class="a" style="left:925px;top:522px;width:222px;height:1px;background:#828282"></div>
<!-- Brush settings header -->
<div class="a" style="left:925px;top:523px;width:204px;height:18px;background:linear-gradient(#f6f6f6,#ececec 50%,#d2d2d2)"></div>
<svg class="a" style="left:931px;top:526px" width="11" height="12" viewBox="0 0 11 12" fill="none" stroke="#111" stroke-width="1.600"><path d="M1.500 1.500l4 3.500 4-3.500M1.500 6.500l4 3.500 4-3.500"/></svg>
<div class="t" style="left:948px;top:525px">Brush Settings</div>
<!-- scrollbar -->
<div class="a" style="left:1129px;top:523px;width:17px;height:168px;background:#f0f0f0"></div>
<div class="a" style="left:1146px;top:391px;width:1px;height:300px;background:#828282"></div>
<div class="a" style="left:1131px;top:541px;width:13px;height:120px;background:#cdcdcd"></div>
<svg class="a" style="left:1130px;top:526px" width="15" height="12" viewBox="0 0 15 12" fill="none" stroke="#505050" stroke-width="1.600"><path d="M3.500 8.500L7.500 4.500l4 4"/></svg>
<div class="a" style="left:949px;top:547px;width:14px;height:15px;background:linear-gradient(90deg,#cbe2f6,#b4d6f3)"></div>
<div class="a" style="left:948px;top:555px;width:115px;height:8px;border:1px solid #6e6e6e;border-top:0;box-sizing:border-box"></div>
<div class="t" style="left:949px;top:548px;width:110px;text-align:right">Radius</div>
<div class="fld" style="left:1072px;top:546px;width:33px;height:16px;padding:1px 3px 0 0">5.0</div>
<div class="t" style="left:1109px;top:548px">px</div>
<div class="a" style="left:930px;top:549px;width:13px;height:13px;border-radius:50%;background:radial-gradient(#555 0 2px,#c4c4c4 3px 4.500px,#777 5.500px 6.500px)"></div>
<div class="a" style="left:949px;top:569px;width:24px;height:15px;background:linear-gradient(90deg,#cbe2f6,#b4d6f3)"></div>
<div class="a" style="left:948px;top:577px;width:115px;height:8px;border:1px solid #6e6e6e;border-top:0;box-sizing:border-box"></div>
<div class="t" style="left:949px;top:570px;width:110px;text-align:right">Min Radius</div>
<div class="fld" style="left:1072px;top:568px;width:33px;height:16px;padding:1px 3px 0 0">20</div>
<div class="t" style="left:1109px;top:570px">%</div>
<div class="a" style="left:930px;top:571px;width:13px;height:13px;border-radius:50%;background:radial-gradient(#555 0 3px,#c4c4c4 4px 4.500px,#777 5.500px 6.500px)"></div>
<div class="a" style="left:949px;top:591px;width:113px;height:15px;background:linear-gradient(90deg,#d4e8f9,#a5d0f3 60%,#7fbcee)"></div>
<div class="a" style="left:948px;top:599px;width:115px;height:8px;border:1px solid #6e6e6e;border-top:0;box-sizing:border-box"></div>
<div class="t" style="left:949px;top:592px;width:110px;text-align:right">Opacity</div>
<div class="fld" style="left:1072px;top:590px;width:33px;height:16px;padding:1px 3px 0 0">100</div>
<div class="t" style="left:1109px;top:592px">%</div>
<div class="a" style="left:930px;top:594px;width:13px;height:11px;box-sizing:border-box;border:1px solid #333;background:linear-gradient(90deg,#eee,#333)"></div>
<div class="a" style="left:949px;top:613px;width:8px;height:15px;background:linear-gradient(90deg,#cbe2f6,#b4d6f3)"></div>
<div class="a" style="left:948px;top:621px;width:115px;height:8px;border:1px solid #6e6e6e;border-top:0;box-sizing:border-box"></div>
<div class="t" style="left:949px;top:614px;width:110px;text-align:right">Spacing</div>
<div class="fld" style="left:1072px;top:612px;width:33px;height:16px;padding:1px 3px 0 0">15</div>
<div class="t" style="left:1109px;top:614px">%</div>
<svg class="a" style="left:929px;top:617px" width="15" height="9" viewBox="0 0 15 9" fill="none" stroke="#333" stroke-width="1.200"><path d="M1.500 4.500h12M4 2L1.500 4.500 4 7M11 2l2.500 2.500L11 7"/></svg>
<div class="a" style="left:925px;top:637px;width:204px;height:18px;background:linear-gradient(#f6f6f6,#ececec 50%,#d2d2d2)"></div>
<svg class="a" style="left:931px;top:640px" width="11" height="12" viewBox="0 0 11 12" fill="none" stroke="#111" stroke-width="1.600"><path d="M1.500 1.500l4 3.500 4-3.500M1.500 6.500l4 3.500 4-3.500"/></svg>
<div class="t" style="left:948px;top:639px">Drawing Method</div>
<div class="a" style="left:929px;top:662px;width:23px;height:23px;box-sizing:border-box;border:1px solid #3399ff;border-radius:3px;background:#fff"></div>
<svg class="a" style="left:925px;top:660px" width="204" height="28" viewBox="0 0 204 28" fill="none" stroke="#111" stroke-width="1.500"><path d="M10 17c-2-4 0-9 3-9s3 4 3 7 1 5 3 5 3-5 2-10" stroke-width="1.800"/><path d="M34 6l14 14"/><path d="M57 6q12 0 14 15" stroke-width="2.200" stroke="#333"/><path d="M93 7.500l-9 6.500 9 6.500M97.500 7.500q-8 6.500 0 13M90 7.500q8 6.500 0 13"/><path d="M109.500 7.500h12v12h-12z"/><circle cx="140.500" cy="13.500" r="6.500"/><path d="M160 8q8-1 14 1l2 11q-8-2-18 0z"/></svg>
<!-- TOOLBOX floating -->
<div class="a" style="left:5px;top:84px;width:56px;height:320px;background:#f0f0f0;box-shadow:1px 1px 4px rgba(0,0,0,.35)"></div>
<div class="hdr" style="left:5px;top:84px;width:56px;height:25px"></div>
<div class="cls" style="left:41px;top:86px">×</div>
<div class="a" style="left:33px;top:111px;width:27px;height:21px;box-sizing:border-box;border:1px solid #3399ff;border-radius:3px;background:#fff"></div>
<svg class="a" style="left:5px;top:109px;filter:drop-shadow(.8px .8px .8px rgba(0,0,0,.3))" width="56" height="172" viewBox="5 109 56 172">
<g fill="#000">
<path d="M25 120h6l-3 3z"/><path d="M52 120h6l-3 3z"/>
<path d="M25 141h6l-3 3z"/><path d="M52 141h6l-3 3z"/>
<path d="M25 162h6l-3 3z"/><path d="M52 162h6l-3 3z"/>
<path d="M25 183h6l-3 3z"/><path d="M52 183h6l-3 3z"/>
<path d="M25 204h6l-3 3z"/>
<path d="M25 225h6l-3 3z"/><path d="M52 225h6l-3 3z"/>
</g>
<defs><linearGradient id="tg1" x1="0" y1="0" x2="1" y2="1"><stop offset="0" stop-color="#777"/><stop offset=".5" stop-color="#222"/><stop offset="1" stop-color="#555"/></linearGradient><radialGradient id="tg2" cx=".35" cy=".3" r=".8"><stop offset="0" stop-color="#666"/><stop offset=".6" stop-color="#2a2a2a"/><stop offset="1" stop-color="#111"/></radialGradient><linearGradient id="tg3" x1="0" y1="0" x2="1" y2="1"><stop offset="0" stop-color="#fff"/><stop offset="1" stop-color="#999"/></linearGradient></defs>
<g fill="none" stroke="#222" stroke-width="1.500" stroke-linecap="round">
<!-- pen -->
<path d="M19.500 113.500L23 116.500 12 127.500 8 129.500 9 125.500Z" fill="url(#tg1)" stroke="none"/><path d="M20.500 115L10.500 126" stroke="#999" stroke-width=".8"/>
<!-- eraser -->
<path d="M35.800 121.600L44.300 116.400 50.300 119.600V122.400L41.700 127.600 35.800 124.800Z" fill="#8a8a8a" stroke="#333" stroke-width="1" stroke-linejoin="round"/><path d="M35.800 121.600L44.300 116.400 50.300 119.600 41.700 124.800Z" fill="#f4f4f4" stroke="#333" stroke-width="1" stroke-linejoin="round"/>
<!-- brush -->
<path d="M22.800 135.300L15.600 143" stroke-width="1.800" stroke="#333"/><path d="M16.500 141.500L18 143.500C15 147 11.500 148.500 8 149C9.500 146 13 143 16.500 141.500Z" fill="url(#tg1)" stroke="none"/>
<!-- airbrush -->
<path d="M49.500 135.300L35.800 149.600" stroke-width="2" stroke="#333"/><path d="M37.500 137.500l4.500 4-1.500 1.500-4-3.500z" fill="#888" stroke="#333" stroke-width=".8"/><path d="M44 143l2.500 2" stroke-width="1.600"/>
<!-- ink pen -->
<path d="M23.400 156L19.500 161.300" stroke-width="1" stroke="#444"/><path d="M19.500 161C16 161.500 13 165 8.500 169.800C14 168.500 18.500 167 20.500 162.500Z" fill="url(#tg3)" stroke="#333" stroke-width="1"/><path d="M8.500 169.800L15 164.500" stroke-width=".7"/>
<!-- marker -->
<path d="M48.500 157.800L40.800 166.500" stroke-width="5.500" stroke="#1a1a1a"/><ellipse cx="39.300" cy="168.300" rx="3.200" ry="2.600" fill="#fff" stroke="#222" stroke-width="1.300" transform="rotate(-40 39.300 168.300)"/>
<!-- blur ball -->
<circle cx="15.400" cy="184.100" r="6.800" fill="url(#tg2)" stroke="none"/>
<!-- bucket -->
<path d="M37.800 183.500L44.300 179.500 50.300 185.400 43.600 190.800Z" fill="url(#tg3)" stroke="#222" stroke-width="1.300" stroke-linejoin="round"/><path d="M41 180.500c.5-3 4.500-3.500 6.500-.5" stroke-width="1.300"/><path d="M37.800 183.500c-1.500 1-1.800 4-1.300 6" stroke-width="1.800"/>
<!-- select -->
<path d="M9.500 199.500h12v12h-12z" stroke-dasharray="3 2" stroke-width="1.600" stroke-linecap="butt"/>
<!-- wand -->
<path d="M45 206l7 7" stroke-width="2.200"/><path d="M42 198v3M42 207v3M36 204h3M45 204h3M38 200l2 2M44 206l2 2M46 200l-2 2M40 206l-2 2" stroke-width="1" stroke="#555"/>
<!-- move -->
<path d="M9 217v11l7-5.500z" fill="#000" stroke="none"/><path d="M18 224v9M13.500 228.500h9" stroke-width="1.300"/><path d="M18 223l-1.500 2h3zM18 234l-1.500-2h3zM12.500 228.500l2-1.500v3zM23.500 228.500l-2-1.500v3z" fill="#000" stroke="none"/>
<!-- crop -->
<path d="M14 240v12.500h12.500M10.500 243.500h12.500v12" stroke-width="2.400" stroke-linecap="butt" stroke="#111"/>
<!-- eyedropper -->
<path d="M50.500 241.500l-3 3" stroke-width="4.200" stroke="#222"/><path d="M46 246l-7 8.500-1 2.500" stroke-width="2.200" stroke="#555"/><path d="M44 243.500l5 5" stroke-width="1.800"/>
<!-- hand -->
<path transform="translate(3.500 1.500)" d="M13 275c-2-3-4-5-5-7 1-1 3 0 4 2v-7c1-1.500 2-1 2.500 0v-2c1-1.500 2.500-1 3 0v1c1-1 2.500-.5 2.500 1v2c1-1 2.500 0 2.500 1v6c0 3-2 5-4 5z" fill="#fff" stroke="#444" stroke-width="1.200"/>
<!-- magnifier -->
<circle cx="43.500" cy="266.500" r="4.500" fill="#e8e8e8" stroke="#333" stroke-width="1.500"/><path d="M47 270l5 5" stroke-width="2.400"/>
</g></svg>
<div class="t" style="left:36px;top:215px;font-family:'Liberation Serif',serif;font-size:20px;line-height:24px;color:#333;letter-spacing:0">T</div>
<!-- swatches -->
<div class="a" style="left:27px;top:300px;width:27px;height:27px;box-sizing:border-box;border:1px solid #828282;background:#b06a6a;box-shadow:inset 0 0 0 1px #fff"></div>
<div class="a" style="left:14px;top:287px;width:27px;height:27px;box-sizing:border-box;border:1px solid #3399ff;background:#5e0e0b;box-shadow:inset 0 0 0 1px #fff"></div>
<svg class="a" style="left:43px;top:286px" width="12" height="12" viewBox="0 0 12 12"><circle cx="6" cy="6" r="5" fill="#fff" stroke="#444"/><path d="M5 3.500L2.500 6 5 8.500zM7 3.500L9.500 6 7 8.500z" fill="#111"/></svg>
<!-- gradient box -->
<div class="a" style="left:7px;top:336px;width:52px;height:30px;box-sizing:border-box;border:1px solid #828282;background:#f0f0f0"></div>
<div class="a" style="left:8px;top:337px;width:40px;height:28px;background:repeating-linear-gradient(90deg,#000 0,#c07070 8px)"></div>
<div class="a" style="left:48px;top:337px;width:1px;height:28px;background:#828282"></div>
<div class="a" style="left:10px;top:346px;width:9px;height:9px;background:#fff;box-shadow:0 0 0 1px #888"></div>
<div class="arr" style="left:51px;top:350px;border-top-color:#444"></div>
<!-- pattern box -->
<div class="a" style="left:7px;top:372px;width:52px;height:30px;box-sizing:border-box;border:1px solid #828282;background:#f0f0f0"></div>
<div class="a" style="left:8px;top:372px;width:40px;height:29px;background:#fff radial-gradient(circle,#000 0 .9px,#0000 1.500px) 3.500px 1.100px/7px 7px"></div>
<div class="a" style="left:8px;top:372px;width:40px;height:29px;background:radial-gradient(circle,#000 0 .9px,#0000 1.500px) 0 4.600px/7px 7px"></div>
<div class="a" style="left:48px;top:372px;width:1px;height:29px;background:#828282"></div>
<div class="a" style="left:10px;top:382px;width:9px;height:9px;background:#fff;box-shadow:0 0 0 1px #999"></div>
<div class="arr" style="left:51px;top:386px;border-top-color:#444"></div>
</body></html>
